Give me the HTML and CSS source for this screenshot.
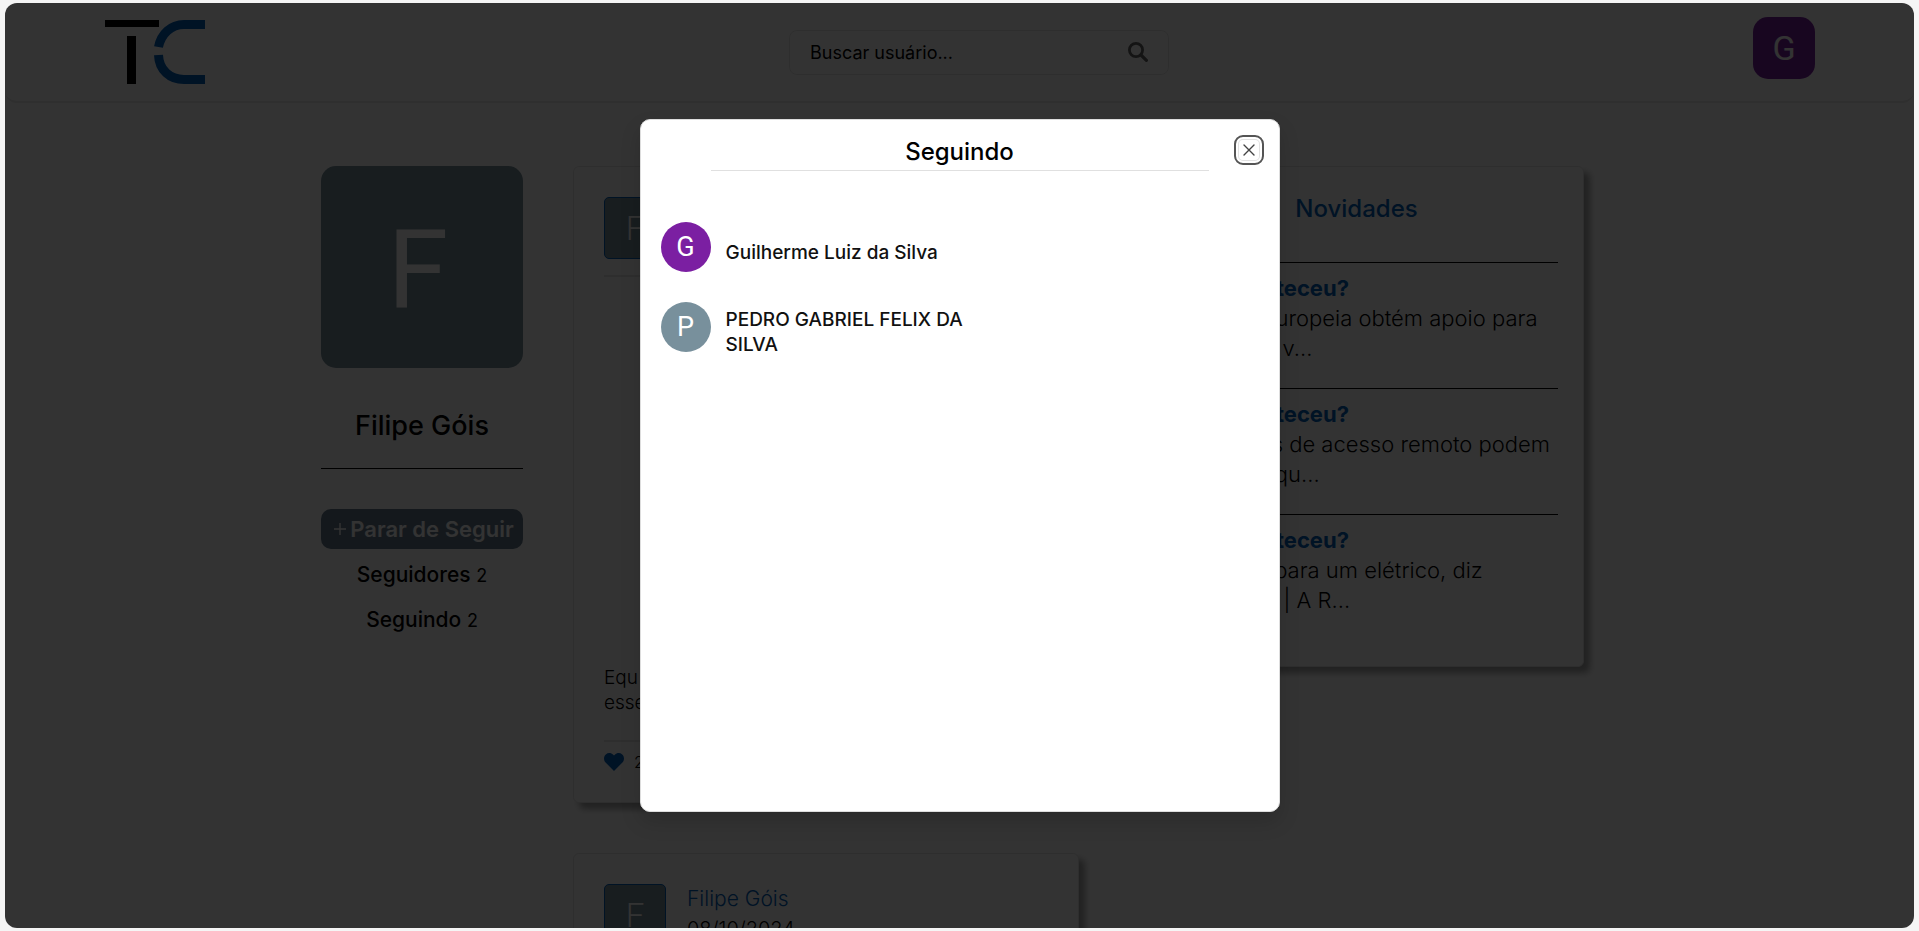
FILE: index.html
```html
<!DOCTYPE html>
<html lang="pt-BR">
<head>
<meta charset="utf-8">
<meta name="viewport" content="width=device-width, initial-scale=1">
<title>TC</title>
<link rel="stylesheet" href="styles.css">
</head>
<body>
<div class="app">
  <header class="topbar">
    <a class="logo" href="#" aria-label="TC">
      <svg width="100" height="64" viewBox="0 0 100 64" aria-hidden="true">
        <path d="M0 0h54v7H0zM22 16h9v48h-9z" fill="#000"/>
        <path class="logo-c" d="M100 4.500H79C66 4.500 56 14 53.500 27"/>
        <path class="logo-c" d="M100 59.500H79C65 59.500 54 50 53.500 35"/>
      </svg>
    </a>
    <form class="search" role="search">
      <input class="search-input" type="text" placeholder="Buscar usuário..." aria-label="Buscar usuário">
      <button class="search-button" type="button" aria-label="Buscar">
        <svg width="20" height="20" viewBox="0 0 20 20" aria-hidden="true"><circle cx="8" cy="8" r="6.600" fill="none" stroke="currentColor" stroke-width="2.800"/><path d="M13 13l5.400 5.400" stroke="currentColor" stroke-width="3.200" stroke-linecap="round"/></svg>
      </button>
    </form>
    <a class="avatar avatar-user" href="#" aria-label="Meu perfil">G</a>
  </header>

  <main class="content">
    <aside class="profile">
      <div class="avatar avatar-large">F</div>
      <h1 class="profile-name">Filipe Góis</h1>
      <hr class="rule-dark">
      <button class="follow" type="button">
        <svg width="12" height="12" viewBox="0 0 12 12" aria-hidden="true"><path d="M6 0v12M0 6h12" stroke="currentColor" stroke-width="1.400"/></svg>
        Parar de Seguir
      </button>
      <button class="stat" type="button">Seguidores <span class="stat-count">2</span></button>
      <button class="stat" type="button">Seguindo <span class="stat-count">2</span></button>
    </aside>

    <section class="feed">
      <article class="card post">
        <div class="post-head"><div class="avatar avatar-post">F</div></div>
        <hr class="rule-soft">
        <div class="post-media"></div>
        <p class="post-text">Equ<br>esse</p>
        <hr class="rule-soft">
        <div class="post-likes">
          <svg class="heart" width="20" height="18" viewBox="0 0 20 18" aria-hidden="true"><path d="M10 18L1.600 9.600C-.6 7.300-.5 3.400 1.800 1.400 4-.5 7.200-.3 9.200 1.800l.8.8.8-.8c2-2.100 5.200-2.300 7.400-.4 2.300 2 2.400 5.900.2 8.200z" fill="currentColor"/></svg>
          <span>2</span>
        </div>
      </article>
      <article class="card post">
        <div class="post-head">
          <div class="avatar avatar-post">F</div>
          <div class="post-meta"><a class="post-author" href="#">Filipe Góis</a><time>08/10/2024</time></div>
        </div>
        <hr class="rule-soft">
        <div class="post-media"></div>
      </article>
    </section>

    <aside class="card news">
      <h2 class="news-title">Novidades</h2>
      <article class="news-item"><h3>O que aconteceu?</h3><p>Comissão Europeia obtém apoio para<br>taxar carros v...</p></article>
      <article class="news-item"><h3>O que aconteceu?</h3><p>Ferramentas de acesso remoto podem<br>fazem com qu...</p></article>
      <article class="news-item"><h3>O que aconteceu?</h3><p>Não é hora para um elétrico, diz<br>CEO Bugatti | A R...</p></article>
    </aside>
  </main>

  <div class="overlay">
    <section class="modal" role="dialog" aria-modal="true" aria-labelledby="modal-title">
      <h2 class="modal-title" id="modal-title">Seguindo</h2>
      <button class="close" type="button" aria-label="Fechar">
        <svg width="12" height="12" viewBox="0 0 12 12" aria-hidden="true"><path d="M1 1l10 10M11 1L1 11" stroke="currentColor" stroke-width="1.400" stroke-linecap="round"/></svg>
      </button>
      <ul class="people">
        <li class="person"><div class="avatar avatar-round purple">G</div><a class="person-name" href="#">Guilherme Luiz da Silva</a></li>
        <li class="person"><div class="avatar avatar-round">P</div><a class="person-name" href="#">PEDRO GABRIEL FELIX DA SILVA</a></li>
      </ul>
    </section>
  </div>
</div>
</body>
</html>
```
FILE: styles.css
```css
* { box-sizing: border-box; }
body { margin: 0; padding: 3px 5px; background: #f5f5f5; color: #000; font-family: Inter, "Noto Sans", sans-serif; font-size: 19px; }
h1, h2, h3, p, ul, hr { margin: 0; padding: 0; }
button { padding: 0; border: 0; background: none; color: inherit; font: inherit; cursor: pointer; }
a { color: inherit; text-decoration: none; }

.app { position: relative; height: calc(100vh - 6px); overflow: hidden; background: #fff; border-radius: 12px; }

.topbar { display: flex; align-items: center; justify-content: space-between; height: 100px; padding: 0 99px 0 100px; border-bottom: 2px solid #e8e8e8; border-radius: 12px; }
.logo { height: 64px; }
.logo svg { display: block; overflow: visible; }
.logo-c { fill: none; stroke: #0060bb; stroke-width: 9; }
.search { display: flex; align-items: center; width: 380px; height: 45px; padding: 0 20px; border: 1px solid #e6e6e6; border-radius: 8px; }
.search-input { flex: 1; min-width: 0; padding: 0; border: 0; outline: 0; background: none; color: #000; font: inherit; font-size: 18px; }
.search-input::placeholder { color: #000; opacity: 1; }
.search-button { display: flex; color: #666; }
.avatar { display: flex; flex: none; align-items: center; justify-content: center; background: #78909c; color: #fff; font-family: Roboto, sans-serif; line-height: 1; }
.avatar-user { width: 62px; height: 62px; margin-bottom: 8px; border-radius: 15px; background: #7b1fa2; font-size: 34px; }

.content { display: grid; grid-template-columns: 202px 506px 455px; column-gap: 50px; align-items: start; justify-content: center; padding: 63px 14px 0 0; }

.profile { display: flex; flex-direction: column; }
.avatar-large { height: 202px; padding: 6px 8px 0 0; border-radius: 15px; font-size: 110px; }
.profile-name { margin-top: 42px; font-size: 27px; font-weight: 500; line-height: 32px; text-align: center; }
.rule-dark { height: 1px; margin-top: 26px; border: 0; background: #000; }
.follow { display: flex; align-items: center; justify-content: center; gap: 4px; height: 40px; margin-top: 40px; margin-bottom: 5px; padding-left: 4px; border-radius: 10px; background: #64788c; color: #fff; font-size: 22px; font-weight: 600; white-space: nowrap; }
.stat { height: 40px; margin-bottom: 5px; font-size: 21px; font-weight: 500; }
.stat-count { font-size: 18px; font-weight: 400; }

.card { border: 1px solid #e6e6e6; border-radius: 6px; background: #fff; box-shadow: 6px 6px 6px rgba(0, 0, 0, .35); }
.feed { display: grid; gap: 50px; }
.post { padding: 30px; }
.post-head { display: flex; gap: 21px; }
.avatar-post { width: 62px; height: 62px; border: 1px solid #0060bb; border-radius: 5px; font-size: 33px; font-weight: 300; }
.post-meta { display: flex; flex-direction: column; font-size: 20px; font-weight: 300; line-height: 30px; }
.post-author { color: #0060bb; font-size: 21px; }
.rule-soft { height: 2px; margin: 16px 0; border: 0; background: #e6e6e6; }
.post-media { height: 372px; }
.post-text { margin-bottom: 25px; font-weight: 300; line-height: 25px; }
.post-likes { display: flex; align-items: center; gap: 10px; height: 8px; margin-bottom: 6px; font-size: 16px; font-weight: 300; }
.heart { color: #0060bb; }

.news { padding: 26px 25px; }
.news-title { margin-bottom: 37px; color: #0060bb; font-size: 24px; font-weight: 500; line-height: 32px; text-align: center; }
.news-item { padding: 10px 0 25px; border-top: 1px solid #000; font-size: 22px; font-weight: 300; line-height: 30px; white-space: nowrap; }
.news-item h3 { color: #0060bb; font-size: 22px; font-weight: 700; }

.overlay { position: absolute; inset: 0; display: flex; align-items: center; justify-content: center; background: rgba(0, 0, 0, .8); }
.modal { position: relative; width: 640px; max-width: 100%; height: 75%; padding: 16px 20px; border: 1px solid #ddd; border-radius: 10px; background: #fff; box-shadow: 0 10px 20px rgba(0, 0, 0, .15); }
.modal-title { margin: 0 50px; padding-bottom: 2px; border-bottom: 1px solid #e0e0e0; font-size: 24px; font-weight: 500; line-height: 32px; text-align: center; }
.close { position: absolute; top: 15px; right: 15px; display: flex; align-items: center; justify-content: center; width: 30px; height: 30px; border: 2px solid #555; border-radius: 9px; box-shadow: inset 0 0 0 2px #fff, inset 0 0 0 3px #e2e2e2; color: #444; }
.people { display: grid; gap: 30px; padding-top: 51px; list-style: none; }
.person { display: flex; gap: 15px; width: 330px; height: 50px; }
.avatar-round { width: 50px; height: 50px; padding-top: 1px; border-radius: 50%; font-size: 27px; }
.purple { background: #7b1fa2; }
.person-name { align-self: center; padding-top: 11px; color: #111; font-weight: 500; line-height: 25px; }
```
